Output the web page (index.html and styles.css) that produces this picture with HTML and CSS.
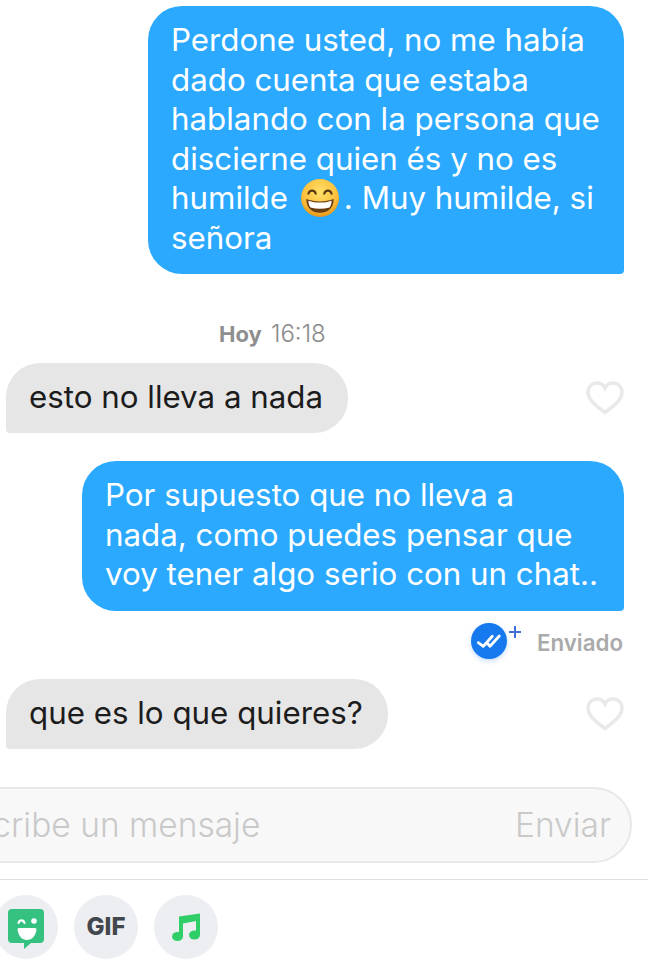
FILE: index.html
```html
<!doctype html>
<html lang="es">

<head>
  <meta charset="utf-8">
  <title>Mensajes</title>
  <link rel="stylesheet" href="styles.css">
</head>

<body>
  <main class="chat">
    <div class="row out first">
      <p class="bubble sent wide">Perdone usted, no me había dado cuenta que estaba hablando con la persona que discierne quien és y no es humilde
        <svg class="emoji" viewBox="0 0 36 36">
          <defs>
            <radialGradient id="face" cx="50%" cy="35%" r="65%">
              <stop offset="0" stop-color="#ffe06a" />
              <stop offset="0.7" stop-color="#fbbf3a" />
              <stop offset="1" stop-color="#e8951c" />
            </radialGradient>
          </defs>
          <circle cx="18" cy="18" r="18" fill="url(#face)" />
          <path d="M7 14c1-4 6-4 7 0M22 14c1-4 6-4 7 0" fill="none" stroke="#5b3a12" stroke-width="2" stroke-linecap="round" />
          <path d="M5 19c8 3 18 3 26 0 0 9-6 13-13 13S5 28 5 19z" fill="#6b3d10" />
          <path d="M7 20.500c7 2.500 15 2.500 22 0 0 3-1 5-2 6.500-6 1.500-12 1.500-18 0-1-1.500-2-3.500-2-6.500z" fill="#fff" />
        </svg>. Muy humilde, si señora</p>
    </div>

    <div class="stamp"><b>Hoy</b> <span class="time">16:18</span></div>

    <div class="row in">
      <p class="bubble received">esto no lleva a nada</p>
      <svg class="heart" viewBox="0 0 38 34">
        <path d="M19 31.500C9 24 2 18.500 2 11 2 6 6 2 11 2c3.500 0 6.500 2 8 5 1.500-3 4.500-5 8-5 5 0 9 4 9 9 0 7.500-7 13-17 20.500z" />
      </svg>
    </div>

    <div class="row out second">
      <p class="bubble sent medium">Por supuesto que no lleva a nada, como puedes pensar que voy tener algo serio con un chat..</p>
    </div>

    <div class="status">
      <span class="read">
        <svg viewBox="0 0 36 36">
          <path d="M7.300 19.700l5 3.600 9-10M16.700 20.700l2.300 2.600 9.300-10.300" fill="none" stroke="#fff" stroke-width="2.800" stroke-linecap="round" stroke-linejoin="round" />
        </svg>
        <i class="plus"></i>
      </span>
      <span class="sent-label">Enviado</span>
    </div>

    <div class="row in">
      <p class="bubble received">que es lo que quieres?</p>
      <svg class="heart" viewBox="0 0 38 34">
        <path d="M19 31.500C9 24 2 18.500 2 11 2 6 6 2 11 2c3.500 0 6.500 2 8 5 1.500-3 4.500-5 8-5 5 0 9 4 9 9 0 7.500-7 13-17 20.500z" />
      </svg>
    </div>
  </main>

  <div class="composer">
    <span class="placeholder">Escribe un mensaje</span>
    <span class="send">Enviar</span>
  </div>

  <div class="tools">
    <span class="tool">
      <svg viewBox="0 0 36 40" class="sticker">
        <path d="M4 0h28a4 4 0 0 1 4 4v26a4 4 0 0 1-4 4H23l-7 6v-6H4a4 4 0 0 1-4-4V4a4 4 0 0 1 4-4z" fill="#35c17f" />
        <path d="M11 19h16a1.500 1.500 0 0 1 1.500 1.700C27.500 27 24 31 19 31s-8.500-4-9.500-10.300A1.500 1.500 0 0 1 11 19z" fill="#fff" />
        <path d="M10.500 14c1-3.500 5-3.500 6 0" fill="none" stroke="#fff" stroke-width="2.200" stroke-linecap="round" />
        <circle cx="26" cy="12" r="2.800" fill="#fff" />
      </svg>
    </span>
    <span class="tool gif">GIF</span>
    <span class="tool">
      <svg viewBox="0 0 28 28" class="note">
        <path d="M7 3.500L28 0.500V22h-4V8L11 10.500V24H7z" fill="#2fce67" />
        <ellipse cx="5.500" cy="23.500" rx="5.500" ry="4.500" fill="#2fce67" />
        <ellipse cx="22.500" cy="22" rx="5.500" ry="4.500" fill="#2fce67" />
      </svg>
    </span>
  </div>
</body>

</html>
```

FILE: styles.css
```css
*,
*::before,
*::after {
  box-sizing: border-box;
}

html {
  font-family: Inter, "Liberation Sans", sans-serif;
  font-size: 31.300px;
}

body {
  margin: 0;
  height: 975px;
  overflow: hidden;
  background: #fff;
}

p {
  margin: 0;
}

.chat {
  padding: 6px 24px 0 6px;
}

.row {
  display: flex;
  align-items: center;
}

.row.out {
  justify-content: flex-end;
}

.row.in {
  justify-content: space-between;
}

.row.second {
  margin-top: 28px;
}

.bubble {
  line-height: 39.500px;
}

.sent {
  padding: 15px 22px 16px 23px;
  background: #2aa9ff;
  color: #fff;
  border-radius: 34px 34px 4px 34px;
}

.wide {
  width: 476px;
}

.medium {
  width: 542px;
}

.received {
  padding: 15px 25px 15.500px 23px;
  background: #e6e6e6;
  color: #1c1c1c;
  border-radius: 34px 34px 34px 4px;
}

.emoji {
  width: 38px;
  height: 38px;
  margin: 0 5px 0 4px;
  vertical-align: -8px;
}

.stamp {
  margin-top: 48px;
  margin-bottom: 17px;
  padding-left: 213px;
  height: 24px;
  line-height: 24px;
  font-size: 22px;
  color: #9a9a9a;
}

.stamp b {
  color: #8e8e8e;
  margin-right: 3px;
}

.time {
  font-size: 24px;
  font-weight: 300;
  color: #8a8a8a;
}

.heart {
  width: 38px;
  height: 34px;
  fill: none;
  stroke: #e9e9e9;
  stroke-width: 3.500;
}

.status {
  display: flex;
  justify-content: flex-end;
  align-items: center;
  gap: 30px;
  height: 38px;
  margin-top: 11px;
  margin-bottom: 19px;
}

.read {
  position: relative;
  display: block;
  width: 36px;
  height: 36px;
  border-radius: 50%;
  background: #1679ee;
  box-shadow: 0 2px 5px rgba(22, 121, 238, 0.25);
}

.read svg {
  display: block;
}

.plus {
  position: absolute;
  top: 3px;
  left: 38px;
  width: 12px;
  height: 12px;
  background:
    linear-gradient(#3f6fd8, #3f6fd8) center / 12px 2px no-repeat,
    linear-gradient(#3f6fd8, #3f6fd8) center / 2px 12px no-repeat;
}

.sent-label {
  font-size: 22.300px;
  font-weight: 600;
  color: #aaaaaa;
  margin-top: 4px;
  margin-right: 1px;
}

.composer {
  display: flex;
  justify-content: space-between;
  align-items: center;
  width: 680px;
  height: 76px;
  margin: 38px 0 0 -48px;
  padding: 0 19px 0 0;
  background: #f8f8f8;
  border: 2px solid #e8e8e8;
  border-radius: 38px;
  font-size: 33.500px;
  color: #c9c9c9;
  font-weight: 300;
}

.placeholder {
  white-space: nowrap;
  margin-left: 1px;
}

.tools {
  display: flex;
  gap: 16px;
  margin-top: 16px;
  padding-top: 15px;
  border-top: 1px solid #e0e0e0;
}

.tool {
  display: flex;
  align-items: center;
  justify-content: center;
  width: 64px;
  height: 64px;
  border-radius: 50%;
  background: #eceef1;
}

.tool:first-child {
  margin-left: -6px;
}

.gif {
  font-size: 24px;
  font-weight: 800;
  color: #42464d;
}

.sticker {
  width: 36px;
  height: 40px;
  margin-top: 4px;
}

.note {
  width: 28px;
  height: 28px;
}
```
